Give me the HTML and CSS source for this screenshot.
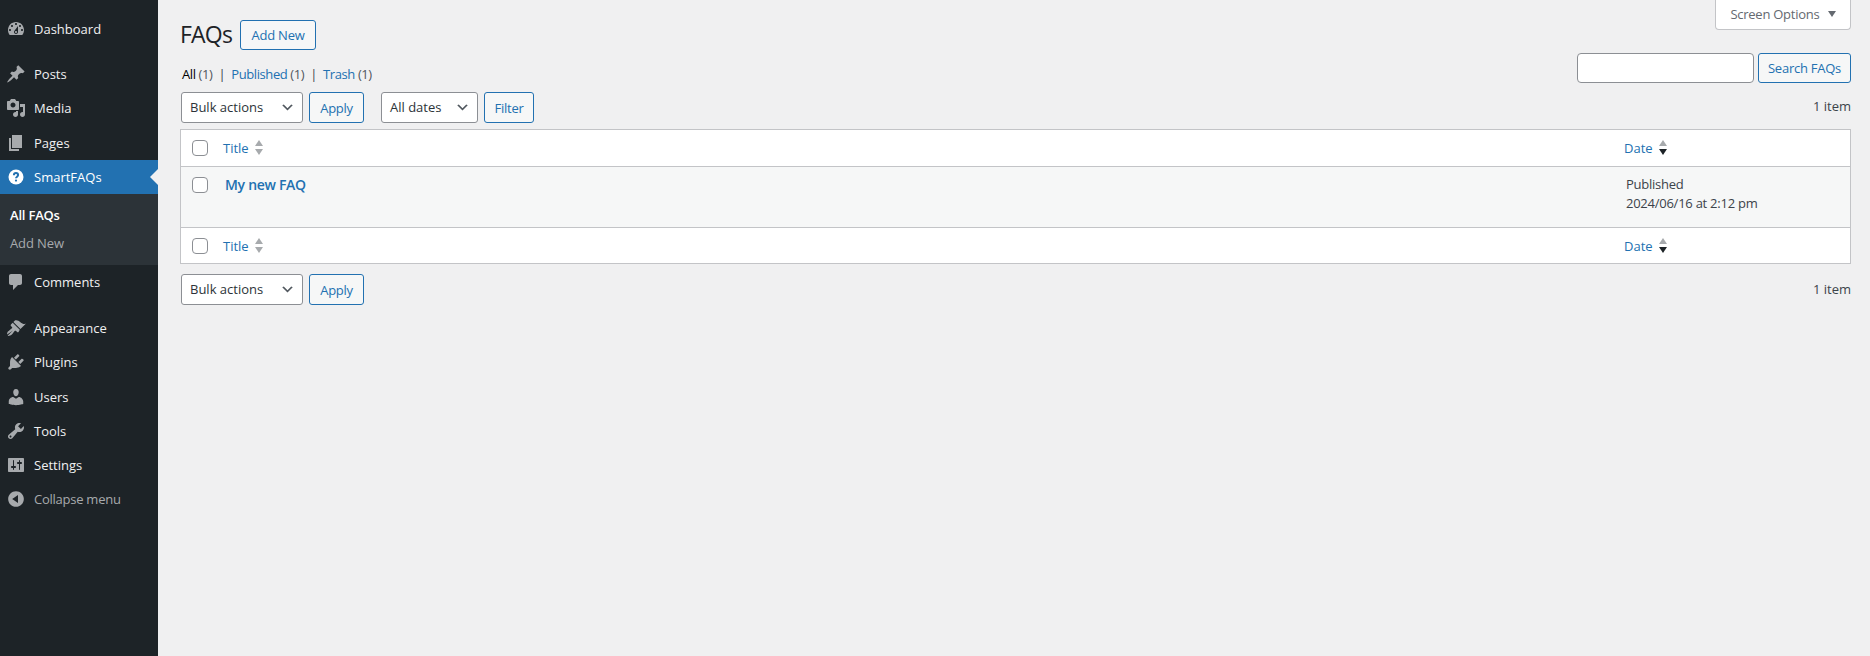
FILE: index.html
```html
<!DOCTYPE html>
<html lang="en">
<head>
    <meta charset="UTF-8">
    <title>FAQs</title>
    <link rel="stylesheet" href="styles.css">
</head>
<body>
    <nav class="sidebar">
        <ul class="menu">
            <li class="menu-item"><svg class="menu-icon" viewBox="0 0 20 20"><path fill-rule="evenodd" d="M3.76 16h12.48c1.1-1.37 1.76-3.11 1.76-5 0-4.42-3.58-8-8-8s-8 3.58-8 8c0 1.89.66 3.63 1.76 5zM10 4c.55 0 1 .45 1 1s-.45 1-1 1-1-.45-1-1 .45-1 1-1zM6 6c.55 0 1 .45 1 1s-.45 1-1 1-1-.45-1-1 .45-1 1-1zm8 0c.55 0 1 .45 1 1s-.45 1-1 1-1-.45-1-1 .45-1 1-1zm-5.37 5.55L12 7v6c0 1.1-.9 2-2 2s-2-.9-2-2c0-.57.24-1.08.63-1.45zM4 10c.55 0 1 .45 1 1s-.45 1-1 1-1-.45-1-1 .45-1 1-1zm12 0c.55 0 1 .45 1 1s-.45 1-1 1-1-.45-1-1 .45-1 1-1zm-5 3c0-.55-.45-1-1-1s-1 .45-1 1 .45 1 1 1 1-.45 1-1z"/></svg>Dashboard</li>
            <li class="menu-sep"></li>
            <li class="menu-item"><svg class="menu-icon" viewBox="0 0 20 20"><path d="M10.44 3.02l1.82-1.82 6.36 6.35-1.83 1.82c-1.05-.68-2.48-.57-3.41.36l-.75.75c-.92.93-1.04 2.35-.35 3.41l-1.83 1.82-2.41-2.41-2.8 2.79c-.42.42-3.38 2.71-3.8 2.29s1.86-3.39 2.28-3.81l2.79-2.79L4.1 9.36l1.83-1.82c1.05.69 2.48.57 3.4-.36l.75-.75c.93-.92 1.05-2.35.36-3.41z"/></svg>Posts</li>
            <li class="menu-item"><svg class="menu-icon" viewBox="0 0 20 20"><path fill-rule="evenodd" d="M13 11V4c0-.55-.45-1-1-1h-1.67L9 1H5L3.67 3H2c-.55 0-1 .45-1 1v7c0 .55.45 1 1 1h10c.55 0 1-.45 1-1zM7 4.5c1.38 0 2.5 1.12 2.5 2.5S8.38 9.5 7 9.5 4.5 8.38 4.5 7 5.62 4.5 7 4.5zM14 6h5v10.5c0 1.38-1.12 2.5-2.5 2.5S14 17.88 14 16.5s1.12-2.5 2.5-2.5c.17 0 .34.02.5.05V9h-3V6zm-4 8.05V13h2v3.5c0 1.38-1.12 2.5-2.5 2.5S7 17.88 7 16.5 8.12 14 9.5 14c.17 0 .34.02.5.05z"/></svg>Media</li>
            <li class="menu-item"><svg class="menu-icon" viewBox="0 0 20 20"><path d="M6 15V2h10v13H6zm-1 1h8v2H3V5h2v11z"/></svg>Pages</li>
            <li class="menu-item current"><svg class="menu-icon" viewBox="0 0 20 20"><circle cx="10" cy="10" r="7.5"/><path class="help-mark" d="M7.9 8.2c0-1.3 1-2.1 2.1-2.1s2.1.8 2.1 2c0 1.6-2.1 1.6-2.1 3.2"/><circle class="help-dot" cx="10" cy="13.6" r="1.1"/></svg>SmartFAQs</li>
            <li class="submenu">
                <a class="sub-link active">All FAQs</a>
                <a class="sub-link">Add New</a>
            </li>
            <li class="menu-item"><svg class="menu-icon" viewBox="0 0 20 20"><path d="M5 2h9c1.1 0 2 .9 2 2v7c0 1.1-.9 2-2 2h-2l-5 5v-5H5c-1.1 0-2-.9-2-2V4c0-1.1.9-2 2-2z"/></svg>Comments</li>
            <li class="menu-sep"></li>
            <li class="menu-item"><svg class="menu-icon" viewBox="0 0 20 20"><path d="M14.48 11.06L7.41 3.99l1.5-1.5c.5-.56 2.3-.47 3.51.32 1.21.8 1.43 1.28 2.91 2.1 1.18.64 2.45 1.26 4.45.85zm-.71.71L6.7 4.7 4.93 6.47c-.39.39-.39 1.02 0 1.41l1.06 1.06c.39.39.39 1.03 0 1.42-.6.6-1.43 1.11-2.21 1.69-.35.26-.7.53-1.01.84C1.43 13.23.91 15.24 1.2 16.4l5.7-3.9-5.29 5.3c1.16.29 3.17-.23 4.51-1.57.31-.31.58-.66.84-1.01.58-.78 1.09-1.61 1.69-2.21.39-.39 1.03-.39 1.42 0l1.06 1.06c.39.39 1.02.39 1.41 0z"/></svg>Appearance</li>
            <li class="menu-item"><svg class="menu-icon" viewBox="0 0 20 20"><path d="M13.11 4.36L9.87 7.6 8 5.73l3.24-3.24c.35-.34 1.05-.2 1.56.32.52.51.66 1.21.31 1.55zm-8 1.77l.91-1.12 9.01 9.01-1.19.84c-.71.71-2.63 1.16-3.82 1.16H6.14L4.9 17.26c-.59.59-1.54.59-2.12 0-.59-.58-.59-1.53 0-2.12l1.24-1.24v-3.88c0-1.13.4-3.19 1.09-3.89zm7.26 3.97l3.24-3.24c.34-.35 1.04-.21 1.55.31.52.51.66 1.21.31 1.55l-3.24 3.25z"/></svg>Plugins</li>
            <li class="menu-item"><svg class="menu-icon" viewBox="0 0 20 20"><path d="M10 9.25c-2.27 0-2.73-3.44-2.73-3.44C7 4.02 7.82 2 9.97 2c2.16 0 2.98 2.02 2.71 3.81 0 0-.41 3.44-2.68 3.44zm0 2.57L12.72 10c2.39 0 4.52 2.33 4.52 4.53v2.49s-3.65 1.13-7.24 1.13c-3.65 0-7.24-1.13-7.24-1.13v-2.49c0-2.25 1.94-4.48 4.47-4.48z"/></svg>Users</li>
            <li class="menu-item"><svg class="menu-icon" viewBox="0 0 20 20"><path fill-rule="evenodd" d="M16.68 9.77c-1.34 1.34-3.3 1.67-4.95.99l-5.41 6.52c-.99.99-2.59.99-3.58 0s-.99-2.59 0-3.57l6.52-5.42c-.68-1.65-.35-3.61.99-4.95 1.28-1.28 3.12-1.62 4.72-1.06l-2.89 2.89 2.82 2.82 2.86-2.87c.53 1.58.18 3.39-1.08 4.65zM3.81 16.21c.4.39 1.04.39 1.43 0 .4-.4.4-1.04 0-1.43-.39-.4-1.03-.4-1.43 0-.39.39-.39 1.03 0 1.43z"/></svg>Tools</li>
            <li class="menu-item"><svg class="menu-icon" viewBox="0 0 20 20"><path fill-rule="evenodd" d="M18 16V4c0-.55-.45-1-1-1H3c-.55 0-1 .45-1 1v12c0 .55.45 1 1 1h14c.55 0 1-.45 1-1zM8 11h1c.55 0 1 .45 1 1s-.45 1-1 1H8v1.5c0 .28-.22.5-.5.5s-.5-.22-.5-.5V13H6c-.55 0-1-.45-1-1s.45-1 1-1h1V5.5c0-.28.22-.5.5-.5s.5.22.5.5V11zm5-2h-1c-.55 0-1-.45-1-1s.45-1 1-1h1V5.5c0-.28.22-.5.5-.5s.5.22.5.5V7h1c.55 0 1 .45 1 1s-.45 1-1 1h-1v5.5c0 .28-.22.5-.5.5s-.5-.22-.5-.5V9z"/></svg>Settings</li>
            <li class="menu-item collapse"><svg class="menu-icon" viewBox="0 0 20 20"><path fill-rule="evenodd" d="M10 2.16c4.33 0 7.84 3.51 7.84 7.84s-3.51 7.84-7.84 7.84S2.16 14.33 2.16 10 5.71 2.16 10 2.16zm2 11.72V6.12L6.18 9.97z"/></svg>Collapse menu</li>
        </ul>
    </nav>

    <main class="content">
        <div class="screen-row">
            <button class="screen-options">Screen Options <span class="caret"></span></button>
        </div>

        <div class="heading">
            <h1>FAQs</h1>
            <a class="btn add-new">Add New</a>
        </div>

        <div class="filter-top">
            <ul class="views">
                <li><b>All</b> <span class="count">(1)</span></li>
                <li class="bar">|</li>
                <li><a>Published</a> <span class="count">(1)</span></li>
                <li class="bar">|</li>
                <li><a>Trash</a> <span class="count">(1)</span></li>
            </ul>
            <div class="search">
                <input type="text" class="search-input">
                <a class="btn">Search FAQs</a>
            </div>
        </div>

        <div class="tablenav top">
            <div class="select bulk">Bulk actions<svg class="chev" viewBox="0 0 20 20"><path d="M5 6l5 5 5-5 2 1-7 7-7-7z"/></svg></div>
            <a class="btn apply">Apply</a>
            <div class="select dates">All dates<svg class="chev" viewBox="0 0 20 20"><path d="M5 6l5 5 5-5 2 1-7 7-7-7z"/></svg></div>
            <a class="btn filter">Filter</a>
            <span class="items">1 item</span>
        </div>

        <table class="list">
            <thead>
                <tr>
                    <td class="check"><span class="checkbox"></span></td>
                    <th><a>Title</a><span class="sort"><i class="up"></i><i class="down"></i></span></th>
                    <th class="date-col"><a>Date</a><span class="sort"><i class="up"></i><i class="down on"></i></span></th>
                </tr>
            </thead>
            <tbody>
                <tr>
                    <td class="check"><span class="checkbox"></span></td>
                    <td class="title-cell"><a>My new FAQ</a></td>
                    <td class="date-cell">Published<br>2024/06/16 at 2:12 pm</td>
                </tr>
            </tbody>
            <tfoot>
                <tr>
                    <td class="check"><span class="checkbox"></span></td>
                    <th><a>Title</a><span class="sort"><i class="up"></i><i class="down"></i></span></th>
                    <th class="date-col"><a>Date</a><span class="sort"><i class="up"></i><i class="down on"></i></span></th>
                </tr>
            </tfoot>
        </table>

        <div class="tablenav bottom">
            <div class="select bulk">Bulk actions<svg class="chev" viewBox="0 0 20 20"><path d="M5 6l5 5 5-5 2 1-7 7-7-7z"/></svg></div>
            <a class="btn apply">Apply</a>
            <span class="items">1 item</span>
        </div>
    </main>
</body>
</html>
```

FILE: styles.css
```css
* {
    box-sizing: border-box;
}
html, body {
    height: 100%;
}
body {
    margin: 0;
    display: flex;
    background: #f0f0f1;
    color: #3c434a;
    font-family: "Open Sans", "Noto Sans", sans-serif;
    font-size: 13px;
    overflow: hidden;
}
a {
    color: #2271b1;
    text-decoration: none;
}

/* sidebar */
.sidebar {
    width: 158px;
    flex-shrink: 0;
    background: #1d2327;
}
.menu {
    list-style: none;
    margin: 12px 0 0;
    padding: 0;
}
.menu-item {
    position: relative;
    display: flex;
    align-items: center;
    height: 34.2px;
    padding-left: 6px;
    color: #f0f0f1;
}
.menu-icon {
    width: 20px;
    height: 20px;
    margin-right: 8px;
    fill: #a7aaad;
    flex-shrink: 0;
}
.menu-sep {
    height: 11px;
}
.menu-sep:nth-child(9) {
    height: 12px;
}
.menu-item.current {
    background: #2271b1;
    color: #fff;
}
.menu-item.current .menu-icon {
    fill: #fff;
}
.menu-item.current::after {
    content: "";
    position: absolute;
    right: 0;
    top: 9px;
    border: 8px solid transparent;
    border-right-color: #f0f0f1;
    border-left: 0;
}
.help-mark {
    fill: none;
    stroke: #2271b1;
    stroke-width: 2;
}
.menu-item .help-dot {
    fill: #2271b1;
}
.menu-item.collapse {
    color: #a7aaad;
    letter-spacing: -0.25px;
}
.submenu {
    display: flex;
    flex-direction: column;
    height: 71px;
    padding: 7px 0 0 10px;
    background: #2c3338;
}
.sub-link {
    height: 28px;
    line-height: 28px;
    color: #a7aaad;
    letter-spacing: -0.1px;
}
.sub-link.active {
    color: #fff;
    font-weight: 600;
    letter-spacing: -0.2px;
}

/* main area */
.content {
    flex: 1;
    min-width: 0;
    padding: 0 19px 0 23px;
}
.screen-row {
    display: flex;
    justify-content: flex-end;
    height: 0;
}
.screen-options {
    height: 30px;
    width: 136px;
    padding: 0 0 2px;
    background: #fff;
    border: 1px solid #c3c4c7;
    border-top: 0;
    border-radius: 0 0 4px 4px;
    color: #646970;
    font: inherit;
    letter-spacing: -0.25px;
}
.caret {
    display: inline-block;
    margin-left: 5px;
    vertical-align: 2px;
    border: 4.5px solid transparent;
    border-top: 6px solid #646970;
    border-bottom: 0;
}
.heading {
    display: flex;
    align-items: center;
    gap: 8px;
    height: 30px;
    margin: 20px 0 0 -1px;
}
h1 {
    margin: 0 0 2px;
    color: #1d2327;
    font-size: 23px;
    font-weight: 400;
    letter-spacing: -0.8px;
}
.btn {
    display: inline-flex;
    align-items: center;
    justify-content: center;
    height: 30px;
    padding: 0 10px;
    background: #f6f7f7;
    border: 1px solid #2271b1;
    border-radius: 3px;
    color: #2271b1;
    letter-spacing: -0.25px;
}
.add-new {
    width: 76px;
}
.filter-top {
    display: flex;
    justify-content: space-between;
    height: 39px;
    margin-top: 3px;
}
.views {
    display: flex;
    gap: 6px;
    list-style: none;
    margin: 12px 0 0 1px;
    padding: 0;
    letter-spacing: -0.4px;
}
.views b {
    color: #000;
    font-weight: 400;
}
.count {
    color: #50575e;
}
.search {
    display: flex;
    gap: 4px;
    height: 30px;
}
.search-input {
    width: 177px;
    height: 30px;
    background: #fff;
    border: 1px solid #8c8f94;
    border-radius: 4px;
}
.search .btn {
    width: 93px;
    padding: 0;
}
.tablenav {
    display: flex;
    align-items: center;
    height: 31px;
    gap: 6px;
}
.tablenav.top {
    margin-bottom: 6px;
}
.tablenav.top .items {
    margin-bottom: 3px;
}
.tablenav.bottom {
    margin-top: 10px;
}
.tablenav.bottom .items {
    margin-bottom: 1px;
}
.select {
    display: flex;
    align-items: center;
    justify-content: space-between;
    height: 31px;
    padding: 0 7px 1px 8px;
    background: #fff;
    border: 1px solid #8c8f94;
    border-radius: 3px;
    color: #2c3338;
}
.bulk {
    width: 122px;
}
.dates {
    width: 97px;
    margin-left: 11px;
}
.chev {
    width: 15px;
    height: 15px;
    fill: #50575e;
}
.tablenav .apply {
    width: 55px;
    height: 31px;
    padding: 0;
}
.tablenav .filter {
    width: 50px;
    height: 31px;
    padding: 0;
}
.items {
    margin-left: auto;
    color: #3c434a;
}

/* table */
.list {
    border-collapse: separate;
    border-spacing: 0;
    background: #fff;
    border: 1px solid #c3c4c7;
    margin-left: -1px;
    width: calc(100% + 1px);
}
.list th {
    height: 36px;
    padding: 0 0 2px 8px;
    text-align: left;
    font-weight: 400;
    white-space: nowrap;
}
.list tfoot th {
    height: 35px;
}
.list th a, .sort {
    vertical-align: middle;
}
.list td.check {
    width: 34px;
    padding: 0 0 0 11px;
}
.list tbody td {
    height: 62px;
    vertical-align: top;
    background: #f6f7f7;
    border-top: 1px solid #c3c4c7;
    border-bottom: 1px solid #c3c4c7;
}
.list tbody td.check {
    padding-top: 10px;
}
.list .date-col {
    width: 234px;
}
.list td.title-cell {
    padding: 8px 0 0 10px;
    font-size: 14px;
    font-weight: 600;
    letter-spacing: -0.3px;
}
.list td.date-cell {
    padding: 8px 0 0 10px;
    line-height: 19px;
    letter-spacing: -0.25px;
}
.checkbox {
    display: block;
    width: 16px;
    height: 16px;
    background: #fff;
    border: 1px solid #8c8f94;
    border-radius: 4px;
}
.sort {
    display: inline-flex;
    flex-direction: column;
    gap: 3px;
    margin-left: 6px;
}
.sort i {
    display: block;
    border: 4px solid transparent;
    border-top: 0;
    border-bottom: 6px solid #a7aaad;
}
.sort i.down {
    border-bottom: 0;
    border-top: 6px solid #a7aaad;
}
.sort i.down.on {
    border-top-color: #1d2327;
}
```
